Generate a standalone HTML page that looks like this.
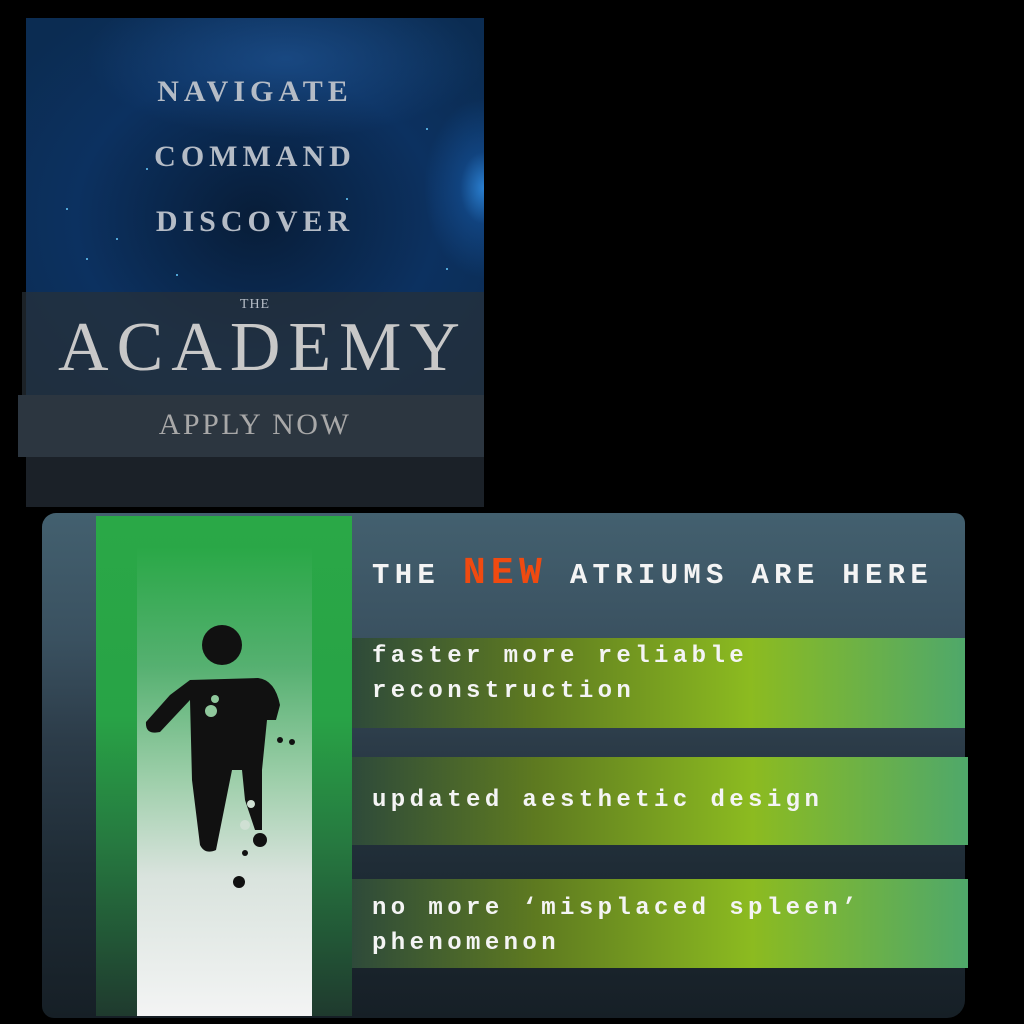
<!DOCTYPE html>
<html><head><style>
body{margin:0;width:1024px;height:1024px;background:#000;position:relative;overflow:hidden;font-family:"Liberation Serif",serif}
.poster{position:absolute;left:26px;top:18px;width:458px;height:489px;overflow:hidden;
background:radial-gradient(ellipse 60px 90px at 458px 170px,#2a7fd0 0%,rgba(20,80,150,.6) 40%,transparent 100%),
radial-gradient(ellipse 200px 80px at 260px 40px,rgba(40,100,170,.45),transparent),
radial-gradient(ellipse 300px 250px at 230px 200px,#081d38 0%,#0c3160 60%,#0b2c52 100%);}
.star{position:absolute;width:2px;height:2px;background:#6cf;border-radius:1px}
.w{position:absolute;left:0;width:458px;text-align:center;color:#b5bcc6;font-weight:bold;letter-spacing:5px}
.band1{position:absolute;left:22px;top:292px;width:462px;height:103px;background:rgba(40,48,56,.7)}
.band2{position:absolute;left:18px;top:395px;width:466px;height:62px;background:#2c3640}
.band3{position:absolute;left:26px;top:457px;width:458px;height:50px;background:#1b2128}
.panel{position:absolute;left:42px;top:513px;width:923px;height:505px;border-radius:14px 10px 18px 12px;
background:linear-gradient(#43606f 0%,#3a5160 25%,#2c3c49 45%,#1f2c36 70%,#161f26 100%)}
.green{position:absolute;left:96px;top:516px;width:256px;height:500px;background:linear-gradient(#2aa847 0%,#28a346 40%,#267a40 65%,#1f3a2e 100%)}
.white{position:absolute;left:137px;top:548px;width:175px;height:468px;background:linear-gradient(#2aa847 0%,#55b070 25%,#9fcfab 50%,#d9e3dd 70%,#f3f4f4 100%)}
.row{position:absolute;left:352px;background:linear-gradient(90deg,#2e4a3a 0%,#5e7a20 30%,#8cbb20 65%,#4fa86a 100%);}
.t{position:absolute;left:372px;font-family:"Liberation Mono",monospace;font-weight:bold;color:#f4f4f4;font-size:24px;letter-spacing:4.4px;line-height:35px}
</style></head><body>
<div class="poster">
<div class="star" style="left:90px;top:220px"></div><div class="star" style="left:60px;top:240px"></div>
<div class="star" style="left:150px;top:256px"></div><div class="star" style="left:400px;top:110px"></div>
<div class="star" style="left:320px;top:180px"></div><div class="star" style="left:40px;top:190px"></div>
<div class="star" style="left:420px;top:250px"></div><div class="star" style="left:120px;top:150px"></div>
<div class="w" style="top:57px;font-size:30px">NAVIGATE</div>
<div class="w" style="top:122px;font-size:30px">COMMAND</div>
<div class="w" style="top:187px;font-size:30px">DISCOVER</div>
</div>
<div class="band1"></div><div class="band2"></div><div class="band3"></div>
<div class="w" style="left:26px;top:297px;font-size:14px;font-weight:normal;letter-spacing:1px">THE</div>
<div class="w" style="left:34px;top:310px;font-size:70px;font-weight:normal;color:#c8c8c8;letter-spacing:8px;line-height:75px">ACADEMY</div>
<div class="w" style="left:26px;top:408px;font-size:30px;font-weight:normal;color:#a8a8a8;letter-spacing:2.5px">APPLY NOW</div>

<div class="panel"></div>
<div class="green"></div>
<div class="white"></div>
<svg style="position:absolute;left:137px;top:600px" width="175" height="300" viewBox="137 600 175 300">
<circle cx="222" cy="645" r="20" fill="#111"/>
<path d="M190 680 L258 678 Q275 680 280 705 L276 720 L267 720 L262 770 L262 830 L255 830 L245 800 L242 770 L232 770 L228 790 L216 850 Q205 855 200 845 L192 780 L190 700 L160 732 Q145 735 146 722 L170 695 Z" fill="#111"/>
<circle cx="211" cy="711" r="6" fill="#8fc89c"/><circle cx="215" cy="699" r="4" fill="#8fc89c"/>
<circle cx="245" cy="825" r="5" fill="#cfe0d3"/><circle cx="251" cy="804" r="4" fill="#cfe0d3"/>
<circle cx="280" cy="740" r="3" fill="#111"/><circle cx="292" cy="742" r="3" fill="#111"/>
<circle cx="260" cy="840" r="7" fill="#111"/><circle cx="245" cy="853" r="3" fill="#111"/>
<circle cx="239" cy="882" r="6" fill="#111"/>
</svg>

<div class="row" style="top:638px;width:613px;height:90px"></div>
<div class="row" style="top:757px;width:616px;height:88px"></div>
<div class="row" style="top:879px;width:616px;height:89px"></div>

<div class="t" style="top:556px;font-size:29px;letter-spacing:5.3px">THE <span style="color:#f04a10;font-size:38px">NEW</span> ATRIUMS ARE HERE</div>
<div class="t" style="top:639px">faster more reliable<br>reconstruction</div>
<div class="t" style="top:783px">updated aesthetic design</div>
<div class="t" style="top:891px">no more ‘misplaced spleen’<br>phenomenon</div>
</body></html>
